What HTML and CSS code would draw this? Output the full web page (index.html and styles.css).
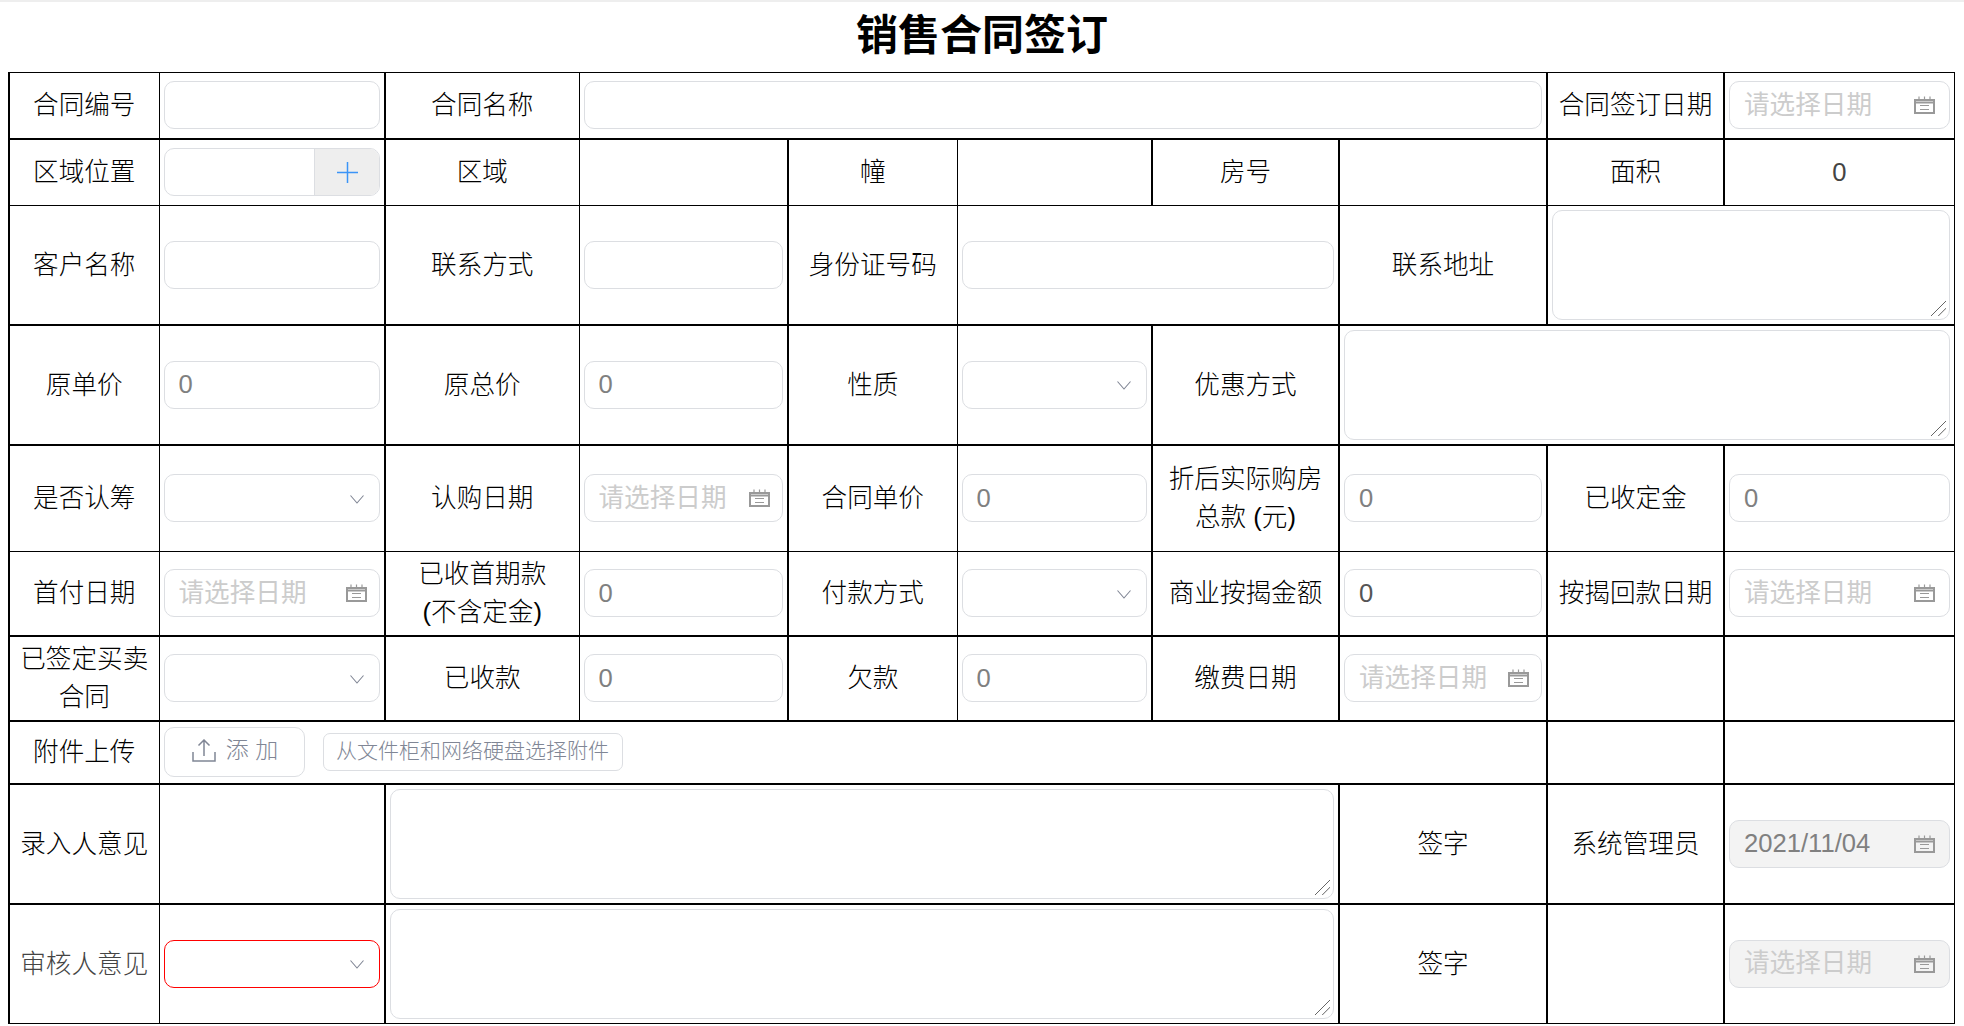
FILE: index.html
```html
<!DOCTYPE html>
<html lang="zh-CN">
<head>
    <meta charset="UTF-8">
    <title>销售合同签订</title>
    <link rel="stylesheet" href="styles.css">
</head>
<body>

    <svg class="icon-defs" width="0" height="0">
        <symbol id="i-date" viewBox="0 0 21 18">
            <path d="M1 4h19v13H1z M1 6.500h19" fill="none" stroke="currentColor" stroke-width="2"/>
            <path d="M5 0.500v3 M10.500 0.500v3 M16 0.500v3 M6 9.500h9 M6 13.500h9" fill="none" stroke="currentColor" stroke-width="1.200"/>
        </symbol>
        <symbol id="i-down" viewBox="0 0 14 9">
            <path d="M0.500 0.500L7 8L13.500 0.500" fill="none" stroke="currentColor" stroke-width="1.100"/>
        </symbol>
        <symbol id="i-upload" viewBox="0 0 24 23">
            <path d="M1 13v9h22v-9 M12 1v16 M6.500 6.500L12 1l5.500 5.500" fill="none" stroke="currentColor" stroke-width="1.500"/>
        </symbol>
    </svg>

    <div class="top-strip"></div>
    <h1 class="title">销售合同签订</h1>

    <table class="contract">
        <colgroup>
            <col class="c1">
            <col class="c2 thick">
            <col class="c3">
            <col class="c4 thick">
            <col class="c5">
            <col class="c6 thick">
            <col class="c7 thick">
            <col class="c8 thick">
            <col class="c9 thick">
            <col class="c10">
        </colgroup>

        <tr class="r66 thick">
            <td>合同编号</td>
            <td><input class="text-input" type="text"></td>
            <td>合同名称</td>
            <td colspan="5"><input class="text-input" type="text"></td>
            <td>合同签订日期</td>
            <td>
                <div class="field">
                    <input type="text" placeholder="请选择日期">
                    <svg class="date-icon"><use href="#i-date"/></svg>
                </div>
            </td>
        </tr>

        <tr class="r67">
            <td>区域位置</td>
            <td>
                <div class="field group">
                    <input type="text">
                    <span class="append">
                        <svg class="plus-icon" viewBox="0 0 21 21"><path d="M0 10.500h21 M10.500 0v21" fill="none" stroke="currentColor" stroke-width="1.500"/></svg>
                    </span>
                </div>
            </td>
            <td>区域</td>
            <td></td>
            <td>幢</td>
            <td></td>
            <td>房号</td>
            <td></td>
            <td>面积</td>
            <td class="value">0</td>
        </tr>

        <tr class="r119 thick">
            <td>客户名称</td>
            <td><input class="text-input" type="text"></td>
            <td>联系方式</td>
            <td><input class="text-input" type="text"></td>
            <td>身份证号码</td>
            <td colspan="2"><input class="text-input" type="text"></td>
            <td>联系地址</td>
            <td colspan="2"><textarea class="memo"></textarea></td>
        </tr>

        <tr class="r120 thick">
            <td>原单价</td>
            <td><input class="text-input" type="text" value="0"></td>
            <td>原总价</td>
            <td><input class="text-input" type="text" value="0"></td>
            <td>性质</td>
            <td>
                <div class="field">
                    <input type="text">
                    <svg class="down-icon"><use href="#i-down"/></svg>
                </div>
            </td>
            <td>优惠方式</td>
            <td colspan="3"><textarea class="memo"></textarea></td>
        </tr>

        <tr class="r107">
            <td>是否认筹</td>
            <td>
                <div class="field">
                    <input type="text">
                    <svg class="down-icon"><use href="#i-down"/></svg>
                </div>
            </td>
            <td>认购日期</td>
            <td>
                <div class="field">
                    <input type="text" placeholder="请选择日期">
                    <svg class="date-icon"><use href="#i-date"/></svg>
                </div>
            </td>
            <td>合同单价</td>
            <td><input class="text-input" type="text" value="0"></td>
            <td>折后实际购房<br>总款 (元)</td>
            <td><input class="text-input" type="text" value="0"></td>
            <td>已收定金</td>
            <td><input class="text-input" type="text" value="0"></td>
        </tr>

        <tr class="r84 thick">
            <td>首付日期</td>
            <td>
                <div class="field">
                    <input type="text" placeholder="请选择日期">
                    <svg class="date-icon"><use href="#i-date"/></svg>
                </div>
            </td>
            <td>已收首期款<br>(不含定金)</td>
            <td><input class="text-input" type="text" value="0"></td>
            <td>付款方式</td>
            <td>
                <div class="field">
                    <input type="text">
                    <svg class="down-icon"><use href="#i-down"/></svg>
                </div>
            </td>
            <td>商业按揭金额</td>
            <td><input class="text-input dark" type="text" value="0"></td>
            <td>按揭回款日期</td>
            <td>
                <div class="field">
                    <input type="text" placeholder="请选择日期">
                    <svg class="date-icon"><use href="#i-date"/></svg>
                </div>
            </td>
        </tr>

        <tr class="r85 thick">
            <td>已签定买卖<br>合同</td>
            <td>
                <div class="field">
                    <input type="text">
                    <svg class="down-icon"><use href="#i-down"/></svg>
                </div>
            </td>
            <td>已收款</td>
            <td><input class="text-input" type="text" value="0"></td>
            <td>欠款</td>
            <td><input class="text-input" type="text" value="0"></td>
            <td>缴费日期</td>
            <td>
                <div class="field">
                    <input type="text" placeholder="请选择日期">
                    <svg class="date-icon"><use href="#i-date"/></svg>
                </div>
            </td>
            <td></td>
            <td></td>
        </tr>

        <tr class="r63 thick">
            <td>附件上传</td>
            <td colspan="7">
                <div class="upload">
                    <button class="add-btn" type="button">
                        <svg class="upload-icon"><use href="#i-upload"/></svg>
                        <span>添 加</span>
                    </button>
                    <button class="pick-btn" type="button">从文件柜和网络硬盘选择附件</button>
                </div>
            </td>
            <td></td>
            <td></td>
        </tr>

        <tr class="r120 thick">
            <td>录入人意见</td>
            <td></td>
            <td colspan="5"><textarea class="memo"></textarea></td>
            <td>签字</td>
            <td>系统管理员</td>
            <td>
                <div class="field disabled">
                    <input type="text" value="2021/11/04" disabled>
                    <svg class="date-icon"><use href="#i-date"/></svg>
                </div>
            </td>
        </tr>

        <tr class="r120">
            <td class="muted">审核人意见</td>
            <td>
                <div class="field error">
                    <input type="text">
                    <svg class="down-icon"><use href="#i-down"/></svg>
                </div>
            </td>
            <td colspan="5"><textarea class="memo"></textarea></td>
            <td>签字</td>
            <td></td>
            <td>
                <div class="field disabled">
                    <input type="text" placeholder="请选择日期" disabled>
                    <svg class="date-icon"><use href="#i-date"/></svg>
                </div>
            </td>
        </tr>
    </table>

</body>
</html>
```

FILE: styles.css
```css
/* Reset some default styles */
* {
    box-sizing: border-box;
}

body {
    margin: 0;
    font-family: "Liberation Sans", "Noto Sans CJK SC", sans-serif;
    font-size: 25.6px;
    font-weight: 300;
    line-height: 38px;
    color: #000;
    background-color: #fff;
}

.icon-defs {
    display: block;
    height: 0;
}

.top-strip {
    height: 2px;
    background-color: #eee;
}

.title {
    margin: 0;
    height: 70px;
    line-height: 68px;
    font-size: 42px;
    font-weight: bold;
    text-align: center;
}

/* Contract table */
.contract {
    width: 1946px;
    margin-left: 8px;
    border-collapse: collapse;
    table-layout: fixed;
    border-top: 1px solid #000;
    border-left: 2px solid #000;
    border-right: 1px solid #000;
    border-bottom: 1px solid #000;
}

.contract td {
    border: 1px solid #000;
    padding: 0 4px;
    text-align: center;
    vertical-align: middle;
}

.contract col.thick {
    border-right: 2px solid #000;
}

.contract tr.thick {
    border-bottom: 2px solid #000;
}

.c1 { width: 150px; }
.c2 { width: 226px; }
.c3 { width: 194px; }
.c4 { width: 209px; }
.c5 { width: 169px; }
.c6 { width: 195px; }
.c7 { width: 187px; }
.c8 { width: 208px; }
.c9 { width: 177px; }
.c10 { width: 230px; }

.r63 { height: 63px; }
.r66 { height: 66px; }
.r67 { height: 67px; }
.r84 { height: 84px; }
.r85 { height: 85px; }
.r107 { height: 107px; }
.r119 { height: 119px; }
.r120 { height: 120px; }

.muted {
    color: #444;
}

.value {
    color: #444;
}

/* Inputs */
input,
textarea,
button {
    font-family: inherit;
    font-weight: inherit;
}

input {
    color: #808080;
    font-size: 25.6px;
}

input::placeholder {
    color: #ccc;
    font-weight: 400;
}

.text-input {
    display: block;
    width: 100%;
    height: 48px;
    padding: 0 14px;
    border: 1px solid #dcdee2;
    border-radius: 10px;
    outline: none;
    background-color: #fff;
}

.text-input.dark {
    color: #555;
}

.field {
    display: flex;
    align-items: center;
    height: 48px;
    border: 1px solid #dcdee2;
    border-radius: 10px;
    background-color: #fff;
    overflow: hidden;
}

.field input {
    flex: 1;
    min-width: 0;
    height: 100%;
    padding: 0 14px;
    border: none;
    outline: none;
    background: transparent;
}

.field.disabled {
    background-color: #f3f3f3;
}

.field.disabled input {
    -webkit-text-fill-color: currentColor;
    opacity: 1;
}

.field.disabled input::placeholder {
    color: #ccc;
    -webkit-text-fill-color: #ccc;
}

.field.error {
    border-color: #f00;
}

.date-icon {
    flex: none;
    width: 21px;
    height: 18px;
    margin-right: 12px;
    color: #999;
}

td:last-child .date-icon {
    margin-right: 14px;
}

.down-icon {
    flex: none;
    width: 14px;
    height: 9px;
    margin-top: 2px;
    margin-right: 15px;
    color: #808695;
}

.append {
    flex: none;
    display: flex;
    align-items: center;
    justify-content: center;
    width: 65px;
    height: 100%;
    border-left: 1px solid #dcdee2;
    background-color: #eee;
}

.plus-icon {
    width: 21px;
    height: 21px;
    color: #3b94f7;
}

/* the resize grip is drawn larger than the browser one */
.memo {
    display: block;
    width: 100%;
    height: 110px;
    padding: 5px 14px;
    border: 1px solid #dcdee2;
    border-radius: 10px;
    outline: none;
    font-size: 25.6px;
    resize: none;
    background: linear-gradient(135deg, transparent 48%, #666 49%, #666 52%, transparent 53%, transparent 72%, #888 73%, #888 76%, transparent 77%) right 3px bottom 3px / 15px 15px no-repeat #fff;
}

/* Upload row */
.upload {
    display: flex;
    align-items: center;
    gap: 18px;
}

.add-btn {
    display: flex;
    align-items: center;
    justify-content: center;
    gap: 10px;
    width: 141px;
    height: 50px;
    padding: 0 0 4px 2px;
    border: 1px solid #dcdee2;
    border-radius: 10px;
    background-color: #fff;
    color: #808695;
    font-size: 23px;
    line-height: 1;
}

.upload-icon {
    width: 24px;
    height: 23px;
}

.pick-btn {
    width: 300px;
    height: 38px;
    padding: 0 0 4px;
    border: 1px solid #dcdee2;
    border-radius: 7px;
    background-color: #fff;
    color: #808695;
    font-size: 21px;
    line-height: 1;
}
```
